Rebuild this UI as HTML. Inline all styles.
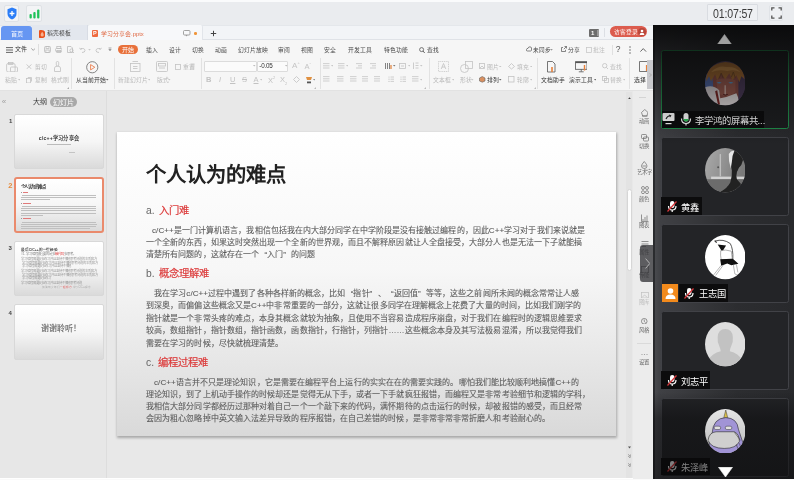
<!DOCTYPE html>
<html lang="zh-CN"><head><meta charset="utf-8">
<style>
*{margin:0;padding:0;box-sizing:border-box}
html,body{width:794px;height:480px;overflow:hidden;background:#fff;font-family:"Liberation Sans",sans-serif}
.a{position:absolute}
.t{position:absolute;white-space:nowrap;line-height:1}
.ql{display:inline-block;width:8px;text-align:right}
.qr{display:inline-block;width:8px;text-align:left}

</style></head><body style="filter:blur(0.3px)">




<div class="a" style="left:0px;top:0px;width:794px;height:2px;background:#fafbfc;"></div>
<div class="a" style="left:0px;top:2px;width:794px;height:23px;background:#eaecef;"></div>
<div class="a" style="left:3.5px;top:4.5px;width:15.5px;height:17px;background:#f3f4f6;border:1px solid #dfe2e6;border-radius:2px"></div>
<svg class="a" style="left:6.5px;top:6.5px" width="10" height="13" viewBox="0 0 10 13"><path d="M5 0.5 L9.5 2.2 L9.5 6.5 Q9.5 10.5 5 12.5 Q0.5 10.5 0.5 6.5 L0.5 2.2Z" fill="#2b7df7"/><path d="M5 4 V9 M2.6 6.5 H7.4" stroke="#fff" stroke-width="1.3"/></svg>
<div class="a" style="left:26px;top:4.5px;width:16px;height:17px;background:#f3f4f6;border:1px solid #dfe2e6;border-radius:2px"></div>
<svg class="a" style="left:28.5px;top:8.5px" width="11" height="10" viewBox="0 0 11 10"><rect x="0.5" y="5" width="2.3" height="4.5" rx="1" fill="#1fc25a"/><rect x="4.3" y="3" width="2.3" height="6.5" rx="1" fill="#1fc25a"/><rect x="8.1" y="0.5" width="2.3" height="9" rx="1" fill="#1fc25a"/></svg>
<div class="a" style="left:707.4px;top:4.3px;width:51px;height:17px;background:#eef0f3;border:1px solid #d9dce1;border-radius:1px"></div>
<div class="t" style="left:713.3px;top:7.6px;font-size:12.6px;color:#3a3a3a;letter-spacing:-0.2px;transform:scaleX(0.84);transform-origin:0 0">01:07:57</div>
<div class="a" style="left:768.6px;top:4.5px;width:14.8px;height:16.5px;background:#eef0f3;border:1px solid #e0e3e7;border-radius:2px"></div>
<svg class="a" style="left:770.5px;top:6.5px" width="11" height="12" viewBox="0 0 11 12"><path d="M0.8 3.5 V0.8 H3.5 M7.5 0.8 H10.2 V3.5 M10.2 8.5 V11.2 H7.5 M3.5 11.2 H0.8 V8.5" stroke="#555" stroke-width="1.3" fill="none"/></svg>
<div class="a" style="left:0px;top:24.5px;width:653px;height:15.5px;background:#f2f4f7;border-top:1px solid #e4e7eb;border-bottom:1px solid #dfe2e7"></div>
<div class="a" style="left:0.5px;top:25.5px;width:31.5px;height:14px;background:#6696f2;border-radius:3px 3px 0 0"></div>
<div class="t" style="left:10.8px;top:30.59px;font-size:6.2px;color:#f4f7ff;">首页</div>
<div class="a" style="left:32px;top:25px;width:56px;height:14.5px;background:#e3e7ee;border-right:1px solid #d8dce4"></div>
<svg class="a" style="left:38.8px;top:29.5px" width="6.6" height="8.2" viewBox="0 0 6.6 8.2"><path d="M1 0 H2.5 A4 4.1 0 0 1 2.5 8.2 H1 Q0 8.2 0 7 V1.2 Q0 0 1 0Z" fill="#e9501c"/><path d="M3.2 1.8 Q4.8 3.8 4.8 5 A1.6 1.6 0 0 1 1.6 5 Q1.6 3.8 3.2 1.8Z" fill="#f7b090"/></svg>
<div class="t" style="left:47px;top:31.01px;font-size:5.8px;color:#444;">稻壳模板</div>
<div class="a" style="left:88px;top:25px;width:114.5px;height:14.5px;background:#f7f8fa;border-radius:2px 2px 0 0;border-right:1px solid #e2e5ea"></div>
<div class="a" style="left:91.8px;top:29.9px;width:6.1px;height:7px;background:#ef6a40;border-radius:1px"></div>
<div class="t" style="left:93px;top:30.5px;font-size:5.5px;color:#fff;font-weight:bold">P</div>
<div class="t" style="left:101px;top:32.05px;font-size:5.9px;color:#e06a45;">学习分享会.pptx</div>
<svg class="a" style="left:182.5px;top:30px" width="8" height="7" viewBox="0 0 8 7"><rect x="0.5" y="0.5" width="6.5" height="4.5" rx="1" fill="none" stroke="#999" stroke-width="0.9"/><path d="M2.5 5 L3.5 6.5 L4.5 5" fill="#999"/></svg>
<div class="a" style="left:194.3px;top:32.3px;width:2.6px;height:2.6px;border-radius:50%;background:#f0953a"></div>
<svg class="a" style="left:209.5px;top:29.8px" width="7" height="7" viewBox="0 0 7 7"><path d="M3.5 0.8 V6.2 M0.8 3.5 H6.2" stroke="#444" stroke-width="1"/></svg>
<div class="a" style="left:588.7px;top:29px;width:10px;height:7.7px;background:#6c6c6c;border-radius:1px"></div>
<div class="a" style="left:596.5px;top:29.8px;width:2.5px;height:6.2px;background:#9a9a9a;"></div>
<div class="t" style="left:591px;top:29.8px;font-size:6px;color:#fff;font-weight:bold">1</div>
<div class="a" style="left:604.3px;top:28.3px;width:0.8px;height:8.7px;background:#dcdfe4;"></div>
<div class="a" style="left:609.9px;top:26.3px;width:37.4px;height:11px;background:#dc5c4e;border-radius:5.5px"></div>
<div class="t" style="left:614px;top:30.02px;font-size:5.6px;color:#fff;">访客登录</div>
<div class="a" style="left:637.8px;top:27.8px;width:8px;height:8px;border-radius:50%;background:#b9473c"></div>
<svg class="a" style="left:638.8px;top:28.8px" width="6" height="6" viewBox="0 0 6 6"><circle cx="3" cy="2" r="1.3" fill="#fff"/><path d="M0.6 6 Q0.6 3.8 3 3.8 Q5.4 3.8 5.4 6Z" fill="#fff"/></svg>
<div class="a" style="left:0px;top:40px;width:653px;height:51px;background:#f6f6f6;border-bottom:1px solid #e2e2e2"></div>
<svg class="a" style="left:6px;top:47.2px" width="7" height="6" viewBox="0 0 7 6"><path d="M0 0.6 H7 M0 3 H7 M0 5.4 H7" stroke="#555" stroke-width="0.9"/></svg>
<div class="t" style="left:15.4px;top:46.40px;font-size:6px;color:#333;">文件</div>
<svg class="a" style="left:30.5px;top:48.2px" width="4.5" height="3" viewBox="0 0 4.5 3"><path d="M0.3 0.3 L2.25 2.4 L4.2 0.3" stroke="#888" stroke-width="0.7" fill="none"/></svg>
<div class="a" style="left:38.3px;top:44px;width:0.8px;height:11px;background:#dedede;"></div>
<svg class="a" style="left:43.5px;top:46px" width="7" height="7" viewBox="0 0 7 7"><rect x="0.5" y="0.5" width="6" height="6" rx="1" stroke="#bdbdbd" stroke-width="0.8" fill="none"/><rect x="2" y="0.5" width="3" height="2" stroke="#bdbdbd" stroke-width="0.8" fill="none"/><rect x="1.8" y="4" width="3.4" height="2.5" stroke="#bdbdbd" stroke-width="0.8" fill="none"/></svg>
<svg class="a" style="left:54.5px;top:46px" width="7.5" height="7" viewBox="0 0 7.5 7"><rect x="0.5" y="2.5" width="6.5" height="3" rx="1" stroke="#bdbdbd" stroke-width="0.8" fill="none"/><rect x="1.8" y="0.5" width="4" height="2" stroke="#bdbdbd" stroke-width="0.8" fill="none"/><rect x="1.8" y="4.5" width="4" height="2" stroke="#bdbdbd" stroke-width="0.8" fill="none"/></svg>
<svg class="a" style="left:67px;top:46px" width="7.5" height="7.5" viewBox="0 0 7.5 7.5"><path d="M0.5 0.5 H4 L5.5 2 V6.5 H0.5Z" stroke="#bdbdbd" stroke-width="0.8" fill="none"/><circle cx="4.5" cy="4.5" r="1.6" stroke="#bdbdbd" stroke-width="0.8" fill="none"/><path d="M5.6 5.6 L7 7" stroke="#bdbdbd" stroke-width="0.8" fill="none"/></svg>
<svg class="a" style="left:79px;top:46.5px" width="7" height="6" viewBox="0 0 7 6"><path d="M1.5 2 Q5.5 0.5 6 3.5 Q6 5.5 3 5.5" stroke="#bdbdbd" stroke-width="0.8" fill="none"/><path d="M0.5 0.8 L1.5 2.3 L3 1.5" stroke="#bdbdbd" stroke-width="0.8" fill="none"/></svg>
<svg class="a" style="left:88px;top:48.5px" width="3" height="2" viewBox="0 0 3 2"><path d="M0.2 0.2 L1.5 1.6 L2.8 0.2" fill="#bbb"/></svg>
<svg class="a" style="left:95px;top:46.5px" width="7" height="6" viewBox="0 0 7 6"><path d="M5.5 2 Q1.5 0.5 1 3.5 Q1 5.5 4 5.5" stroke="#bdbdbd" stroke-width="0.8" fill="none"/><path d="M6.5 0.8 L5.5 2.3 L4 1.5" stroke="#bdbdbd" stroke-width="0.8" fill="none"/></svg>
<svg class="a" style="left:107.5px;top:47px" width="4" height="5" viewBox="0 0 4 5"><path d="M0.5 0.8 H3.5 M0.8 2 H3.2 L2 4Z" stroke="#999" stroke-width="0.6" fill="#999"/></svg>
<div class="a" style="left:118px;top:45px;width:20.3px;height:9.3px;background:#e8703a;border-radius:4.6px"></div>
<div class="t" style="left:122.2px;top:46.70px;font-size:6px;color:#fff;">开始</div>
<div class="t" style="left:145.8px;top:47.91px;font-size:5.8px;color:#4a4a4a;">插入</div>
<div class="t" style="left:169.4px;top:47.91px;font-size:5.8px;color:#4a4a4a;">设计</div>
<div class="t" style="left:192px;top:47.91px;font-size:5.8px;color:#4a4a4a;">切换</div>
<div class="t" style="left:214.8px;top:47.91px;font-size:5.8px;color:#4a4a4a;">动画</div>
<div class="t" style="left:237.5px;top:47.91px;font-size:5.8px;color:#4a4a4a;">幻灯片放映</div>
<div class="t" style="left:277.9px;top:47.91px;font-size:5.8px;color:#4a4a4a;">审阅</div>
<div class="t" style="left:300.6px;top:47.91px;font-size:5.8px;color:#4a4a4a;">视图</div>
<div class="t" style="left:324px;top:47.91px;font-size:5.8px;color:#4a4a4a;">安全</div>
<div class="t" style="left:348.2px;top:47.91px;font-size:5.8px;color:#4a4a4a;">开发工具</div>
<div class="t" style="left:383.8px;top:47.91px;font-size:5.8px;color:#4a4a4a;">特色功能</div>
<svg class="a" style="left:419.2px;top:46.6px" width="6" height="6.5" viewBox="0 0 6 6.5"><circle cx="2.6" cy="2.6" r="2" stroke="#555" stroke-width="0.8" fill="none"/><path d="M4 4 L5.7 6" stroke="#555" stroke-width="0.9"/></svg>
<div class="t" style="left:426.5px;top:47.91px;font-size:5.8px;color:#3e3e3e;">查找</div>
<svg class="a" style="left:526px;top:46.4px" width="6" height="6" viewBox="0 0 6 6"><path d="M1.5 5 Q0 5 0.5 3.5 Q0.8 2.2 2 2.4 Q2.5 0.6 4 0.8 Q5.8 1 5.6 3 Q5.8 5 4.5 5Z" stroke="#555" stroke-width="0.7" fill="none"/></svg>
<div class="t" style="left:532.5px;top:48.02px;font-size:5.6px;color:#3e3e3e;">未同步</div>
<svg class="a" style="left:550.3px;top:48.7px" width="3" height="2" viewBox="0 0 3 2"><path d="M0.2 0.2 L1.5 1.6 L2.8 0.2" fill="#777"/></svg>
<svg class="a" style="left:560.5px;top:46.3px" width="6" height="6" viewBox="0 0 6 6"><path d="M3.5 0.5 H5.5 V2.5 M5.5 0.5 L2.8 3.2 M4.5 3.8 V5.5 H0.5 V1.5 H2" stroke="#555" stroke-width="0.7" fill="none"/></svg>
<div class="t" style="left:567.5px;top:47.91px;font-size:5.8px;color:#3e3e3e;">分享</div>
<svg class="a" style="left:585.5px;top:46.5px" width="6" height="6" viewBox="0 0 6 6"><rect x="0.5" y="0.5" width="5" height="5" stroke="#c4c4c4" stroke-width="0.7" fill="none"/></svg>
<div class="t" style="left:592.5px;top:47.91px;font-size:5.8px;color:#bdbdbd;">批注</div>
<div class="a" style="left:611.5px;top:45px;width:0.7px;height:10px;background:#e0e0e0;"></div>
<div class="t" style="left:615.8px;top:45.3px;font-size:8.5px;color:#555">?</div>
<svg class="a" style="left:629.2px;top:46px" width="2" height="8" viewBox="0 0 2 8"><circle cx="1" cy="1" r="0.7" fill="#555"/><circle cx="1" cy="4" r="0.7" fill="#555"/><circle cx="1" cy="7" r="0.7" fill="#555"/></svg>
<svg class="a" style="left:640px;top:47.5px" width="6.5" height="4" viewBox="0 0 6.5 4"><path d="M0.4 3.6 L3.25 0.6 L6.1 3.6" stroke="#555" stroke-width="0.9" fill="none"/></svg>
<svg class="a" style="left:6px;top:61.7px" width="12" height="10.5" viewBox="0 0 12 10.5"><rect x="0.6" y="1.5" width="8.5" height="8.5" rx="1.5" stroke="#c2c2c2" stroke-width="0.8" fill="none"/><rect x="2.5" y="0.5" width="4.5" height="2" stroke="#c2c2c2" stroke-width="0.8" fill="none"/><rect x="4.5" y="5" width="7" height="5" rx="1" stroke="#c2c2c2" stroke-width="0.8" fill="none" fill="#f6f6f6"/></svg>
<div class="t" style="left:5px;top:78.31px;font-size:5.8px;color:#bababa;">粘贴</div>
<svg class="a" style="left:17.5px;top:79px" width="2.5" height="1.7" viewBox="0 0 2.5 1.7"><path d="M0 0 L1.25 1.5 L2.5 0" fill="#c4c4c4"/></svg>
<svg class="a" style="left:25.5px;top:63.8px" width="6" height="5.5" viewBox="0 0 6 5.5"><path d="M0.5 0.5 L5.5 5 M5.5 0.5 L0.5 5" stroke="#c2c2c2" stroke-width="0.8" fill="none"/></svg>
<div class="t" style="left:34.5px;top:65.21px;font-size:5.8px;color:#b9b9b9;">剪切</div>
<svg class="a" style="left:25.5px;top:76.5px" width="6" height="6.5" viewBox="0 0 6 6.5"><rect x="0.5" y="1.5" width="4" height="4.5" stroke="#c2c2c2" stroke-width="0.8" fill="none"/><path d="M1.8 0.5 H5.5 V4.5" stroke="#c2c2c2" stroke-width="0.8" fill="none"/></svg>
<div class="t" style="left:34.5px;top:78.31px;font-size:5.8px;color:#b9b9b9;">复制</div>
<svg class="a" style="left:53.5px;top:61.2px" width="7" height="11" viewBox="0 0 7 11"><rect x="2.3" y="0.5" width="2.4" height="4.5" rx="1" stroke="#c2c2c2" stroke-width="0.8" fill="none"/><path d="M0.5 10.5 V7 Q0.5 5.2 3.5 5.2 Q6.5 5.2 6.5 7 V10.5Z" stroke="#c2c2c2" stroke-width="0.8" fill="none"/></svg>
<div class="t" style="left:50.5px;top:78.31px;font-size:5.8px;color:#b9b9b9;">格式刷</div>
<svg class="a" style="left:67px;top:86.5px" width="2" height="2" viewBox="0 0 2 2"><path d="M0 2 L2 0 L2 2Z" fill="#aaa"/></svg>
<div class="a" style="left:71.3px;top:58px;width:0.7px;height:31px;background:#e2e2e2;"></div>
<svg class="a" style="left:86px;top:61px" width="12.5" height="12.5" viewBox="0 0 12.5 12.5"><circle cx="6.25" cy="6.25" r="5.6" stroke="#777" stroke-width="0.9" fill="none"/><path d="M4.6 3.6 L8.8 6.25 L4.6 8.9Z" stroke="#e8703a" stroke-width="0.8" fill="none"/></svg>
<div class="t" style="left:76px;top:78.25px;font-size:5.9px;color:#3a3a3a;">从当前开始</div>
<svg class="a" style="left:106px;top:79px" width="2.5" height="1.7" viewBox="0 0 2.5 1.7"><path d="M0 0 L1.25 1.5 L2.5 0" fill="#666"/></svg>
<div class="a" style="left:113.8px;top:58px;width:0.7px;height:31px;background:#e2e2e2;"></div>
<svg class="a" style="left:130px;top:61px" width="10.5" height="11" viewBox="0 0 10.5 11"><rect x="0.5" y="2.5" width="9.5" height="8" stroke="#c2c2c2" stroke-width="0.8" fill="none"/><path d="M2.5 0.5 H8 M3 5.5 H7.5 M3 7.5 H7.5" stroke="#c2c2c2" stroke-width="0.8" fill="none"/></svg>
<div class="t" style="left:118px;top:78.31px;font-size:5.8px;color:#b9b9b9;">新建幻灯片</div>
<svg class="a" style="left:147.5px;top:79px" width="2.5" height="1.7" viewBox="0 0 2.5 1.7"><path d="M0 0 L1.25 1.5 L2.5 0" fill="#c4c4c4"/></svg>
<svg class="a" style="left:156px;top:61px" width="12" height="11" viewBox="0 0 12 11"><rect x="0.5" y="0.5" width="11" height="10" rx="1" stroke="#c2c2c2" stroke-width="0.8" fill="none"/><rect x="2.5" y="2.5" width="7" height="2.5" stroke="#c2c2c2" stroke-width="0.8" fill="none"/><path d="M3 7 H9" stroke="#c2c2c2" stroke-width="0.8" fill="none"/></svg>
<div class="t" style="left:157px;top:78.31px;font-size:5.8px;color:#b9b9b9;">版式</div>
<svg class="a" style="left:168px;top:79px" width="2.5" height="1.7" viewBox="0 0 2.5 1.7"><path d="M0 0 L1.25 1.5 L2.5 0" fill="#c4c4c4"/></svg>
<svg class="a" style="left:175px;top:63.5px" width="6" height="6" viewBox="0 0 6 6"><rect x="0.5" y="0.5" width="5" height="5" stroke="#c2c2c2" stroke-width="0.8" fill="none"/></svg>
<div class="t" style="left:182.5px;top:65.21px;font-size:5.8px;color:#b9b9b9;">重置</div>
<svg class="a" style="left:190px;top:63px" width="5" height="7" viewBox="0 0 5 7"><path d="M0.5 1 H4.5 M0.5 3 H4.5 M0.5 5 H4.5" stroke="#c2c2c2" stroke-width="0.8" fill="none"/></svg>
<div class="a" style="left:200.5px;top:58px;width:0.7px;height:31px;background:#e2e2e2;"></div>
<div class="a" style="left:204px;top:60.5px;width:53px;height:11.2px;background:#fbfbfb;border:1px solid #dcdcdc;border-radius:1px"></div>
<div class="a" style="left:256.8px;top:60.5px;width:31.5px;height:11.2px;background:#fbfbfb;border:1px solid #dcdcdc;border-radius:1px"></div>
<svg class="a" style="left:253px;top:65.3px" width="2.5" height="1.7" viewBox="0 0 2.5 1.7"><path d="M0 0 L1.25 1.5 L2.5 0" fill="#bbb"/></svg>
<svg class="a" style="left:285px;top:65.3px" width="2.5" height="1.7" viewBox="0 0 2.5 1.7"><path d="M0 0 L1.25 1.5 L2.5 0" fill="#bbb"/></svg>
<div class="t" style="left:259.3px;top:62.8px;font-size:6.3px;color:#333;letter-spacing:-0.2px">-0.05</div>
<div class="t" style="left:292px;top:62px;font-size:8px;color:#c4c4c4">A</div>
<div class="t" style="left:297.5px;top:61px;font-size:4px;color:#c4c4c4">+</div>
<div class="t" style="left:304.5px;top:62.5px;font-size:7.5px;color:#c4c4c4">A</div>
<div class="t" style="left:309.5px;top:61px;font-size:4px;color:#c4c4c4">-</div>
<div class="t" style="left:206px;top:75.6px;font-size:7.5px;color:#c2c2c2;font-weight:bold">B</div>
<div class="t" style="left:219px;top:75.6px;font-size:7.5px;color:#c2c2c2;font-style:italic">I</div>
<div class="t" style="left:230px;top:75.6px;font-size:7.5px;color:#c2c2c2;text-decoration:underline">U</div>
<div class="t" style="left:242px;top:75.6px;font-size:7.5px;color:#c2c2c2;text-decoration:line-through">S</div>
<div class="t" style="left:253.5px;top:75.6px;font-size:7.5px;color:#c2c2c2;text-decoration:underline">A</div>
<svg class="a" style="left:259.5px;top:79px" width="2.5" height="1.7" viewBox="0 0 2.5 1.7"><path d="M0 0 L1.25 1.5 L2.5 0" fill="#c4c4c4"/></svg>
<div class="t" style="left:268px;top:75.6px;font-size:7.5px;color:#c2c2c2">X<sup style="font-size:4px">2</sup></div>
<div class="t" style="left:280px;top:75.6px;font-size:7.5px;color:#c2c2c2">X<sub style="font-size:4px">2</sub></div>
<svg class="a" style="left:293px;top:76px" width="7" height="7" viewBox="0 0 7 7"><path d="M3.5 0.5 L6.5 3.5 L3.5 6.5 L0.5 3.5Z" stroke="#c2c2c2" stroke-width="0.8" fill="none"/></svg>
<svg class="a" style="left:305px;top:75.5px" width="9" height="8" viewBox="0 0 9 8"><path d="M1 1 H7 L6 4 H2Z" fill="#e09040"/><rect x="2" y="5.5" width="4" height="1.8" fill="#555"/></svg>
<svg class="a" style="left:312.5px;top:79px" width="2.5" height="1.7" viewBox="0 0 2.5 1.7"><path d="M0 0 L1.25 1.5 L2.5 0" fill="#888"/></svg>
<svg class="a" style="left:314px;top:86.5px" width="2" height="2" viewBox="0 0 2 2"><path d="M0 2 L2 0 L2 2Z" fill="#bbb"/></svg>
<div class="a" style="left:320px;top:58px;width:0.7px;height:31px;background:#e2e2e2;"></div>
<svg class="a" style="left:323px;top:62.8px" width="6.5" height="7.1000000000000005" viewBox="0 0 6.5 7.1000000000000005"><path d="M0 0.6 H6.5" stroke="#c4c4c4" stroke-width="0.8"/><path d="M0 2.8000000000000003 H6.5" stroke="#c4c4c4" stroke-width="0.8"/><path d="M0 5.0 H6.5" stroke="#c4c4c4" stroke-width="0.8"/></svg>
<svg class="a" style="left:330.5px;top:65.3px" width="2.5" height="1.7" viewBox="0 0 2.5 1.7"><path d="M0 0 L1.25 1.5 L2.5 0" fill="#c4c4c4"/></svg>
<svg class="a" style="left:338px;top:62.8px" width="6.5" height="7.1000000000000005" viewBox="0 0 6.5 7.1000000000000005"><path d="M0 0.6 H6.5" stroke="#c4c4c4" stroke-width="0.8"/><path d="M0 2.8000000000000003 H6.5" stroke="#c4c4c4" stroke-width="0.8"/><path d="M0 5.0 H6.5" stroke="#c4c4c4" stroke-width="0.8"/></svg>
<svg class="a" style="left:345.5px;top:65.3px" width="2.5" height="1.7" viewBox="0 0 2.5 1.7"><path d="M0 0 L1.25 1.5 L2.5 0" fill="#c4c4c4"/></svg>
<svg class="a" style="left:356px;top:62.8px" width="6" height="7.1000000000000005" viewBox="0 0 6 7.1000000000000005"><path d="M0 0.6 H6" stroke="#c4c4c4" stroke-width="0.8"/><path d="M2 2.8000000000000003 H6" stroke="#c4c4c4" stroke-width="0.8"/><path d="M0 5.0 H6" stroke="#c4c4c4" stroke-width="0.8"/></svg>
<svg class="a" style="left:370px;top:62.8px" width="6" height="7.1000000000000005" viewBox="0 0 6 7.1000000000000005"><path d="M0 0.6 H6" stroke="#c4c4c4" stroke-width="0.8"/><path d="M2 2.8000000000000003 H6" stroke="#c4c4c4" stroke-width="0.8"/><path d="M0 5.0 H6" stroke="#c4c4c4" stroke-width="0.8"/></svg>
<svg class="a" style="left:384.5px;top:62.2px" width="8" height="7.5" viewBox="0 0 8 7.5"><path d="M0.5 1 V7 M2.5 1 V7 M4.5 1 V7" stroke="#666" stroke-width="0.8"/><path d="M6 3 V7" stroke="#e0803a" stroke-width="1.2"/></svg>
<svg class="a" style="left:393px;top:65.3px" width="2.5" height="1.7" viewBox="0 0 2.5 1.7"><path d="M0 0 L1.25 1.5 L2.5 0" fill="#777"/></svg>
<svg class="a" style="left:399px;top:62.5px" width="7" height="6" viewBox="0 0 7 6"><rect x="0.5" y="0.5" width="6" height="5" stroke="#c2c2c2" stroke-width="0.8" fill="none"/><path d="M2 3 H5" stroke="#c2c2c2" stroke-width="0.8" fill="none"/></svg>
<svg class="a" style="left:407.5px;top:65.3px" width="2.5" height="1.7" viewBox="0 0 2.5 1.7"><path d="M0 0 L1.25 1.5 L2.5 0" fill="#c4c4c4"/></svg>
<svg class="a" style="left:413px;top:62px" width="6" height="7.5" viewBox="0 0 6 7.5"><path d="M0.5 0.5 V7 M2.5 1 H5.5 M2.5 3.5 H5.5 M2.5 6 H5.5" stroke="#c2c2c2" stroke-width="0.8" fill="none"/></svg>
<svg class="a" style="left:420px;top:65.3px" width="2.5" height="1.7" viewBox="0 0 2.5 1.7"><path d="M0 0 L1.25 1.5 L2.5 0" fill="#c4c4c4"/></svg>
<svg class="a" style="left:323px;top:76px" width="6.5" height="7.1000000000000005" viewBox="0 0 6.5 7.1000000000000005"><path d="M0 0.6 H6.5" stroke="#c4c4c4" stroke-width="0.8"/><path d="M0 2.8000000000000003 H6.5" stroke="#c4c4c4" stroke-width="0.8"/><path d="M0 5.0 H6.5" stroke="#c4c4c4" stroke-width="0.8"/></svg>
<svg class="a" style="left:337px;top:76px" width="6.5" height="7.1000000000000005" viewBox="0 0 6.5 7.1000000000000005"><path d="M0 0.6 H6.5" stroke="#c4c4c4" stroke-width="0.8"/><path d="M0 2.8000000000000003 H6.5" stroke="#c4c4c4" stroke-width="0.8"/><path d="M0 5.0 H6.5" stroke="#c4c4c4" stroke-width="0.8"/></svg>
<svg class="a" style="left:350px;top:76px" width="6.5" height="7.1000000000000005" viewBox="0 0 6.5 7.1000000000000005"><path d="M0 0.6 H6.5" stroke="#c4c4c4" stroke-width="0.8"/><path d="M0 2.8000000000000003 H6.5" stroke="#c4c4c4" stroke-width="0.8"/><path d="M0 5.0 H6.5" stroke="#c4c4c4" stroke-width="0.8"/></svg>
<svg class="a" style="left:361.5px;top:76px" width="6.5" height="7.1000000000000005" viewBox="0 0 6.5 7.1000000000000005"><path d="M0 0.6 H6.5" stroke="#c4c4c4" stroke-width="0.8"/><path d="M0 2.8000000000000003 H6.5" stroke="#c4c4c4" stroke-width="0.8"/><path d="M0 5.0 H6.5" stroke="#c4c4c4" stroke-width="0.8"/></svg>
<svg class="a" style="left:373.5px;top:76px" width="6.5" height="7.1000000000000005" viewBox="0 0 6.5 7.1000000000000005"><path d="M0 0.6 H6.5" stroke="#c4c4c4" stroke-width="0.8"/><path d="M0 2.8000000000000003 H6.5" stroke="#c4c4c4" stroke-width="0.8"/><path d="M0 5.0 H6.5" stroke="#c4c4c4" stroke-width="0.8"/></svg>
<svg class="a" style="left:388px;top:76px" width="6" height="6.5" viewBox="0 0 6 6.5"><circle cx="1" cy="1" r="0.6" fill="#c4c4c4"/><circle cx="1" cy="3.2" r="0.6" fill="#c4c4c4"/><circle cx="1" cy="5.4" r="0.6" fill="#c4c4c4"/><path d="M2.5 1 H6 M2.5 3.2 H6 M2.5 5.4 H6" stroke="#c4c4c4" stroke-width="0.8"/></svg>
<svg class="a" style="left:400px;top:76px" width="6" height="6.5" viewBox="0 0 6 6.5"><circle cx="1" cy="1" r="0.6" fill="#c4c4c4"/><circle cx="1" cy="3.2" r="0.6" fill="#c4c4c4"/><circle cx="1" cy="5.4" r="0.6" fill="#c4c4c4"/><path d="M2.5 1 H6 M2.5 3.2 H6 M2.5 5.4 H6" stroke="#c4c4c4" stroke-width="0.8"/></svg>
<svg class="a" style="left:412px;top:76px" width="6.5" height="7.1000000000000005" viewBox="0 0 6.5 7.1000000000000005"><path d="M0 0.6 H6.5" stroke="#c4c4c4" stroke-width="0.8"/><path d="M0 2.8000000000000003 H6.5" stroke="#c4c4c4" stroke-width="0.8"/><path d="M0 5.0 H6.5" stroke="#c4c4c4" stroke-width="0.8"/></svg>
<svg class="a" style="left:419.5px;top:79px" width="2.5" height="1.7" viewBox="0 0 2.5 1.7"><path d="M0 0 L1.25 1.5 L2.5 0" fill="#c4c4c4"/></svg>
<svg class="a" style="left:424px;top:86.5px" width="2" height="2" viewBox="0 0 2 2"><path d="M0 2 L2 0 L2 2Z" fill="#bbb"/></svg>
<div class="a" style="left:428.5px;top:58px;width:0.7px;height:31px;background:#e2e2e2;"></div>
<svg class="a" style="left:437.5px;top:61px" width="11" height="11" viewBox="0 0 11 11"><rect x="0.5" y="0.5" width="10" height="10" stroke="#c2c2c2" stroke-width="0.8" fill="none" stroke-dasharray="1 0.8"/><path d="M3.2 8 L5.5 2.5 L7.8 8 M4 6 H7" stroke="#c2c2c2" stroke-width="0.8" fill="none"/></svg>
<div class="t" style="left:433px;top:78.31px;font-size:5.8px;color:#b9b9b9;">文本框</div>
<svg class="a" style="left:451.5px;top:79px" width="2.5" height="1.7" viewBox="0 0 2.5 1.7"><path d="M0 0 L1.25 1.5 L2.5 0" fill="#c4c4c4"/></svg>
<svg class="a" style="left:460px;top:60.5px" width="13" height="12" viewBox="0 0 13 12"><circle cx="4.5" cy="7.5" r="4" stroke="#c2c2c2" stroke-width="0.8" fill="none"/><rect x="5.5" y="0.5" width="7" height="7" stroke="#c2c2c2" stroke-width="0.8" fill="none"/></svg>
<div class="t" style="left:459.5px;top:78.31px;font-size:5.8px;color:#b9b9b9;">形状</div>
<svg class="a" style="left:471px;top:79px" width="2.5" height="1.7" viewBox="0 0 2.5 1.7"><path d="M0 0 L1.25 1.5 L2.5 0" fill="#c4c4c4"/></svg>
<svg class="a" style="left:479px;top:63.3px" width="6" height="6" viewBox="0 0 6 6"><rect x="0.5" y="0.5" width="5" height="5" stroke="#c2c2c2" stroke-width="0.8" fill="none"/><path d="M1 5 L3 3 L5 5" stroke="#c2c2c2" stroke-width="0.8" fill="none"/></svg>
<div class="t" style="left:486.5px;top:65.21px;font-size:5.8px;color:#b9b9b9;">图片</div>
<svg class="a" style="left:499px;top:65.7px" width="2.5" height="1.7" viewBox="0 0 2.5 1.7"><path d="M0 0 L1.25 1.5 L2.5 0" fill="#c4c4c4"/></svg>
<svg class="a" style="left:479px;top:76.3px" width="6.5" height="6.5" viewBox="0 0 6.5 6.5"><path d="M3.25 0.5 L6 2 V5 L3.25 6.2 L0.5 5 V2Z" fill="#d99060" stroke="#666" stroke-width="0.6"/></svg>
<div class="t" style="left:486.5px;top:78.31px;font-size:5.8px;color:#333;">排列</div>
<svg class="a" style="left:499px;top:79px" width="2.5" height="1.7" viewBox="0 0 2.5 1.7"><path d="M0 0 L1.25 1.5 L2.5 0" fill="#666"/></svg>
<svg class="a" style="left:508px;top:63px" width="7" height="6.5" viewBox="0 0 7 6.5"><path d="M3.5 0.5 L6.5 3.5 L3.5 6 L0.5 3.5Z" stroke="#c2c2c2" stroke-width="0.8" fill="none"/></svg>
<div class="t" style="left:516.5px;top:65.21px;font-size:5.8px;color:#b9b9b9;">填充</div>
<svg class="a" style="left:529.5px;top:65.7px" width="2.5" height="1.7" viewBox="0 0 2.5 1.7"><path d="M0 0 L1.25 1.5 L2.5 0" fill="#c4c4c4"/></svg>
<svg class="a" style="left:508px;top:76.3px" width="6.5" height="6.5" viewBox="0 0 6.5 6.5"><rect x="0.5" y="0.5" width="5.5" height="5.5" stroke="#c2c2c2" stroke-width="0.8" fill="none"/></svg>
<div class="t" style="left:516.5px;top:78.31px;font-size:5.8px;color:#b9b9b9;">轮廓</div>
<svg class="a" style="left:529.5px;top:79px" width="2.5" height="1.7" viewBox="0 0 2.5 1.7"><path d="M0 0 L1.25 1.5 L2.5 0" fill="#c4c4c4"/></svg>
<svg class="a" style="left:534px;top:86.5px" width="2" height="2" viewBox="0 0 2 2"><path d="M0 2 L2 0 L2 2Z" fill="#bbb"/></svg>
<div class="a" style="left:537.3px;top:58px;width:0.7px;height:31px;background:#e2e2e2;"></div>
<svg class="a" style="left:546.5px;top:61px" width="9" height="11.5" viewBox="0 0 9 11.5"><path d="M0.5 0.5 H5.5 L8 3 V11 H0.5Z" stroke="#555" stroke-width="0.8" fill="none"/><path d="M5 6 V11" stroke="#e8803a" stroke-width="1.6"/></svg>
<div class="t" style="left:541px;top:78.31px;font-size:5.8px;color:#333;">文档助手</div>
<svg class="a" style="left:574.5px;top:61px" width="12.5" height="11.5" viewBox="0 0 12.5 11.5"><rect x="0.5" y="0.8" width="11.5" height="7.5" stroke="#555" stroke-width="0.8" fill="none"/><rect x="0.5" y="0.5" width="11.5" height="1.6" fill="#555"/><path d="M6.25 8.3 V10.5 M3.8 10.8 H8.7" stroke="#555" stroke-width="0.8"/><path d="M9.5 4 V9.5" stroke="#e8803a" stroke-width="1.4"/></svg>
<div class="t" style="left:569px;top:78.31px;font-size:5.8px;color:#333;">演示工具</div>
<svg class="a" style="left:593.5px;top:79px" width="2.5" height="1.7" viewBox="0 0 2.5 1.7"><path d="M0 0 L1.25 1.5 L2.5 0" fill="#666"/></svg>
<svg class="a" style="left:602px;top:63px" width="6.5" height="6.5" viewBox="0 0 6.5 6.5"><circle cx="2.7" cy="2.7" r="2.2" stroke="#c2c2c2" stroke-width="0.8" fill="none"/><path d="M4.3 4.3 L6 6" stroke="#c2c2c2" stroke-width="0.8" fill="none"/></svg>
<div class="t" style="left:609.5px;top:65.21px;font-size:5.8px;color:#b9b9b9;">查找</div>
<svg class="a" style="left:602px;top:76px" width="7" height="7" viewBox="0 0 7 7"><rect x="0.5" y="0.5" width="4" height="4" stroke="#c2c2c2" stroke-width="0.8" fill="none"/><rect x="2.5" y="2.5" width="4" height="4" stroke="#c2c2c2" stroke-width="0.8" fill="none"/></svg>
<div class="t" style="left:609.5px;top:78.31px;font-size:5.8px;color:#b9b9b9;">替换</div>
<svg class="a" style="left:622.5px;top:79px" width="2.5" height="1.7" viewBox="0 0 2.5 1.7"><path d="M0 0 L1.25 1.5 L2.5 0" fill="#c4c4c4"/></svg>
<div class="a" style="left:628.5px;top:58px;width:0.7px;height:31px;background:#e2e2e2;"></div>
<svg class="a" style="left:639px;top:61px" width="9" height="11" viewBox="0 0 9 11"><path d="M8.5 0.5 H0.5 V10.5 H8.5" stroke="#555" stroke-width="0.8" fill="none"/><path d="M7.5 4 V10" stroke="#e8803a" stroke-width="1.2"/></svg>
<div class="t" style="left:634px;top:78.31px;font-size:5.8px;color:#333;">选择</div>
<div class="a" style="left:647px;top:59.8px;width:5.6px;height:29.6px;background:#c9c9cd;"></div>
<svg class="a" style="left:648.5px;top:72.5px" width="3" height="4" viewBox="0 0 3 4"><path d="M0.5 0.3 L2.5 2 L0.5 3.7" stroke="#999" stroke-width="0.6" fill="none"/></svg>
<!-- ===== work area ===== -->
<div class="a" style="left:0;top:91px;width:653px;height:387px;background:#e8e8e8"></div>
<div class="a" style="left:0;top:91px;width:107px;height:387px;background:#e7e7e7;border-right:1px solid #dddddd"></div>
<div class="t" style="left:1.8px;top:97.6px;font-size:8px;color:#a0a0a0">&laquo;</div>
<div class="t" style="left:33px;top:97.5px;font-size:7px;color:#3a3a3a">大纲</div>
<div class="a" style="left:50px;top:97px;width:26.5px;height:10px;border-radius:5px;background:#a8a8a8"></div>
<div class="t" style="left:52.5px;top:98.5px;font-size:7px;color:#fff">幻灯片</div>
<div class="a" style="left:14.3px;top:113.8px;width:89.3px;height:55.6px;border:1px solid #d8d8d8;border-radius:2px;background:linear-gradient(#ffffff,#f6f6f6 50%,#dadada)"></div>
<div class="a" style="left:14.3px;top:241.1px;width:89.3px;height:55.2px;border:1px solid #d8d8d8;border-radius:2px;background:linear-gradient(#ffffff,#f6f6f6 50%,#dadada)"></div>
<div class="a" style="left:14.3px;top:304.4px;width:89.3px;height:55.4px;border:1px solid #d8d8d8;border-radius:2px;background:linear-gradient(#ffffff,#f6f6f6 50%,#dadada)"></div>
<div class="t" style="left:9px;top:118px;font-size:6px;font-weight:bold;color:#444">1</div>
<div class="t" style="left:8.3px;top:181.5px;font-size:7.5px;font-weight:bold;color:#e58a3c">2</div>
<div class="t" style="left:8.5px;top:245px;font-size:6px;font-weight:bold;color:#444">3</div>
<div class="t" style="left:8.5px;top:310px;font-size:6px;font-weight:bold;color:#444">4</div>
<div class="t" style="left:38.7px;top:135.6px;font-size:5.2px;font-weight:bold;color:#333;letter-spacing:0.2px">c/c++学习分享会</div>
<div class="a" style="left:47.0px;top:144.25px;width:23.7px;height:1.1px;background:#bbb"></div>
<div class="a" style="left:69.4px;top:151.70px;width:5.8px;height:1.0px;background:#c4c4c4"></div>
<div class="t" style="left:21px;top:248.70px;font-size:3.6px;color:#444;letter-spacing:-0.1px;font-weight:bold;">最后C/C++的一些经验</div>
<div class="t" style="left:21px;top:253.20px;font-size:3.3px;color:#888;letter-spacing:-0.1px;">#1. 学习编程最重要的是多<span style="color:#e04040">敲代码</span>多思考。</div>
<div class="t" style="left:21px;top:258.00px;font-size:3.3px;color:#9a9a9a;letter-spacing:-0.1px;">学习编程需要多多练习并且坚持不懈地思考问题的本质和方</div>
<div class="t" style="left:22px;top:261.70px;font-size:3.3px;color:#9a9a9a;letter-spacing:-0.1px;">学习编程需要多多练习并且坚持不懈地思考问题的本质和方</div>
<div class="t" style="left:22px;top:265.40px;font-size:3.3px;color:#9a9a9a;letter-spacing:-0.1px;">学习编程需要多多练习并且坚持不懈地</div>
<div class="t" style="left:21px;top:270.10px;font-size:3.3px;color:#9a9a9a;letter-spacing:-0.1px;">学习编程需要多多练习并且坚持不懈地思考问题的本质和方</div>
<div class="t" style="left:22px;top:273.80px;font-size:3.3px;color:#9a9a9a;letter-spacing:-0.1px;">学习编程需要多多练习并且坚持不懈地思考问题的本质和方</div>
<div class="t" style="left:22px;top:277.40px;font-size:3.3px;color:#9a9a9a;letter-spacing:-0.1px;">学习编程需要多多练习</div>
<div class="t" style="left:21px;top:282.10px;font-size:3.3px;color:#9a9a9a;letter-spacing:-0.1px;">学习编程需要多多练习并且坚持不懈地思考问题</div>
<div class="t" style="left:42.3px;top:286.60px;font-size:2.6px;color:#aaa;letter-spacing:-0.1px;">加油吧少年们 <span style="color:#e06060">一起努力</span> 学习C/C++程序</div>
<div class="t" style="left:41.3px;top:325.2px;font-size:8px;color:#6a6a6a;-webkit-text-stroke:0.15px #6a6a6a">谢谢聆听！</div>
<div class="a" style="left:13.8px;top:176.8px;width:90.1px;height:56.5px;border:2px solid #ea8a6c;border-radius:3px;background:linear-gradient(#ffffff,#f6f6f6 50%,#dadada)"></div>
<div class="t" style="left:20.8px;top:184.9px;font-size:4.3px;font-weight:bold;color:#2a2a2a;letter-spacing:-0.5px">个人认为的难点</div>
<div class="a" style="left:20.82px;top:191.95px;width:1.38px;height:1.00px;background:#999"></div>
<div class="a" style="left:23.07px;top:191.78px;width:4.50px;height:1.04px;background:#e07a7a"></div>
<div class="a" style="left:21.86px;top:195px;width:74.56px;height:1px;background:#bfbfbf"></div>
<div class="a" style="left:20.99px;top:197px;width:75.08px;height:1px;background:#bfbfbf"></div>
<div class="a" style="left:20.82px;top:199px;width:28.89px;height:1px;background:#bfbfbf"></div>
<div class="a" style="left:20.99px;top:202.85px;width:1.38px;height:1.00px;background:#999"></div>
<div class="a" style="left:23.24px;top:202.67px;width:7.78px;height:1.04px;background:#e07a7a"></div>
<div class="a" style="left:22.20px;top:206px;width:73.35px;height:1px;background:#bfbfbf"></div>
<div class="a" style="left:20.82px;top:208px;width:75.08px;height:1px;background:#bfbfbf"></div>
<div class="a" style="left:20.82px;top:210px;width:75.25px;height:1px;background:#bfbfbf"></div>
<div class="a" style="left:20.82px;top:213px;width:75.25px;height:1px;background:#bfbfbf"></div>
<div class="a" style="left:20.99px;top:215px;width:22.49px;height:1px;background:#bfbfbf"></div>
<div class="a" style="left:20.82px;top:218.24px;width:1.38px;height:1.00px;background:#999"></div>
<div class="a" style="left:23.07px;top:218.07px;width:8.13px;height:1.04px;background:#e07a7a"></div>
<div class="a" style="left:22.20px;top:222px;width:73.35px;height:1px;background:#bfbfbf"></div>
<div class="a" style="left:20.82px;top:224px;width:76.12px;height:1px;background:#bfbfbf"></div>
<div class="a" style="left:20.82px;top:226px;width:75.08px;height:1px;background:#bfbfbf"></div>
<div class="a" style="left:20.82px;top:228px;width:68.85px;height:1px;background:#bfbfbf"></div>
<!-- main slide -->
<div class="a" style="left:117px;top:132px;width:499px;height:304px;box-shadow:0.5px 1px 2.5px 0.5px rgba(0,0,0,.28)"><div class="a" style="left:0;top:0;width:499px;height:304px;background:linear-gradient(#ffffff,#f7f7f7 45%,#e4e4e4 80%,#d9d9d9)"></div>
<div class="t" style="left:29px;top:32.6px;font-size:20.3px;font-weight:bold;color:#222">个人认为的难点</div>
<div class="t" style="left:29px;top:74px;font-size:10.3px;color:#666">a. <span style="color:#dc3a3a;-webkit-text-stroke:0.2px #dc3a3a;margin-left:1.5px">入门难</span></div>
<div class="t" style="left:29px;top:137px;font-size:10.3px;color:#666">b. <span style="color:#dc3a3a;-webkit-text-stroke:0.2px #dc3a3a;margin-left:1.5px">概念理解难</span></div>
<div class="t" style="left:29px;top:225.5px;font-size:10.3px;color:#666">c. <span style="color:#dc3a3a;-webkit-text-stroke:0.2px #dc3a3a;margin-left:1.5px">编程过程难</span></div>
<div class="a" style="left:29px;top:92.5px;font-size:8px;letter-spacing:0.08px;line-height:12.4px;color:#5c5c5c;white-space:nowrap;-webkit-text-stroke:0.1px #5c5c5c">
<div style="padding-left:6px">c/C++是一门计算机语言，我相信包括我在内大部分同学在中学阶段是没有接触过编程的，因此C++学习对于我们来说就是</div>
<div>一个全新的东西，如果这时突然出现一个全新的世界观，而且不解释原因就让人全盘接受，大部分人也是无法一下子就能搞</div>
<div>清楚所有问题的，这就存在一个<span class="ql">“</span>入门<span class="qr">”</span>的问题</div>
</div>
<div class="a" style="left:29px;top:156px;font-size:8px;letter-spacing:0.08px;line-height:12.4px;color:#5c5c5c;white-space:nowrap;-webkit-text-stroke:0.1px #5c5c5c">
<div style="padding-left:8px">我在学习c/C++过程中遇到了各种各样新的概念，比如<span class="ql">“</span>指针<span class="qr">”</span>、<span class="ql">“</span>返回值<span class="qr">”</span>等等，这些之前闻所未闻的概念常常让人感</div>
<div>到深奥，而偏偏这些概念又是C++中非常重要的一部分，这就让很多同学在理解概念上花费了大量的时间，比如我们刚学的</div>
<div>指针就是一个非常头疼的难点，本身其概念就较为抽象，且使用不当容易造成程序崩盘，对于我们在编程时的逻辑思维要求</div>
<div>较高，数组指针，指针数组，指针函数，函数指针，行指针，列指针……这些概念本身及其写法极易混淆，所以我觉得我们</div>
<div>需要在学习的时候，尽快就梳理清楚。</div>
</div>
<div class="a" style="left:29px;top:244.5px;font-size:8px;letter-spacing:0.08px;line-height:12.3px;color:#5c5c5c;white-space:nowrap;-webkit-text-stroke:0.1px #5c5c5c">
<div style="padding-left:8px">c/C++语言并不只是理论知识，它是需要在编程平台上运行的实实在在的需要实践的。哪怕我们能比较顺利地搞懂C++的</div>
<div>理论知识，到了上机动手操作的时候却还是觉得无从下手，或者一下手就疯狂报错，而编程又是非常考验细节和逻辑的学科，</div>
<div>我相信大部分同学都经历过那种对着自己一个一个敲下来的代码，满怀期待的点击运行的时候，却被报错的感受，而且经常</div>
<div>会因为粗心忽略掉中英文输入法差异导致的程序报错，在自己差错的时候，是非常非常非常折磨人和考验耐心的。</div>
</div>
</div>
<div class="a" style="left:626.2px;top:91.5px;width:6.3px;height:386.5px;background:#e3e3e3;"></div>
<svg class="a" style="left:628px;top:96.5px" width="3" height="2.5" viewBox="0 0 3 2.5"><path d="M0 2.2 L1.5 0.3 L3 2.2Z" fill="#444"/></svg>
<div class="a" style="left:626.5px;top:188.8px;width:5.8px;height:82.5px;background:#fdfdfd;border:1px solid #d6d6d6;border-radius:3px"></div>
<svg class="a" style="left:628px;top:445.5px" width="3" height="3" viewBox="0 0 3 3"><path d="M0 0.5 L1.5 2.5 L3 0.5Z" fill="#555"/></svg>
<svg class="a" style="left:627.8px;top:453.8px" width="3.5" height="4" viewBox="0 0 3.5 4"><path d="M0.3 0.5 L1.75 1.8 L3.2 0.5 M0.3 2.3 L1.75 3.6 L3.2 2.3" stroke="#555" stroke-width="0.6" fill="none"/></svg>
<svg class="a" style="left:627.8px;top:462.8px" width="3.5" height="4" viewBox="0 0 3.5 4"><path d="M0.3 0.5 L1.75 1.8 L3.2 0.5 M0.3 2.3 L1.75 3.6 L3.2 2.3" stroke="#555" stroke-width="0.6" fill="none"/></svg>
<div class="a" style="left:632.5px;top:91px;width:20.5px;height:387.5px;background:#ececec;"></div>
<div class="a" style="left:638.8px;top:97px;width:7.5px;height:0.9px;background:#d4d4d4;"></div>
<svg class="a" style="left:640.5px;top:109.3px" width="7.5" height="7.5" viewBox="0 0 7.5 7.5"><path d="M3.75 0.5 L7 3.5 L5.8 7 H1.7 L0.5 3.5Z" stroke="#6a6a6a" stroke-width="0.7" fill="none"/><path d="M1 7 H6.5" stroke="#6a6a6a" stroke-width="0.7" fill="none"/></svg>
<div class="t" style="left:594px;width:100px;text-align:center;top:118.63px;font-size:5.4px;color:#666">动画</div>
<svg class="a" style="left:640.5px;top:134.3px" width="8" height="7.5" viewBox="0 0 8 7.5"><rect x="0.5" y="0.5" width="5" height="4" rx="0.8" stroke="#6a6a6a" stroke-width="0.7" fill="none"/><rect x="2.5" y="3" width="5" height="4" rx="0.8" stroke="#6a6a6a" stroke-width="0.7" fill="none" fill="#efefef"/></svg>
<div class="t" style="left:594px;width:100px;text-align:center;top:144.03px;font-size:5.4px;color:#666">切换</div>
<svg class="a" style="left:641px;top:161px" width="6.5" height="7.5" viewBox="0 0 6.5 7.5"><path d="M3.25 0.5 Q6 3.5 6 5 A2.75 2.5 0 0 1 0.5 5 Q0.5 3.5 3.25 0.5Z" stroke="#6a6a6a" stroke-width="0.7" fill="none"/><path d="M1.5 5 H5" stroke="#6a6a6a" stroke-width="0.7" fill="none"/></svg>
<div class="t" style="left:594.3px;width:100px;text-align:center;top:169.53px;font-size:5.4px;color:#666">艺术字</div>
<svg class="a" style="left:640.5px;top:186.3px" width="8" height="8.2" viewBox="0 0 8 8.2"><circle cx="2" cy="2" r="1.5" stroke="#6a6a6a" stroke-width="0.7" fill="none"/><circle cx="6" cy="2" r="1.5" stroke="#6a6a6a" stroke-width="0.7" fill="none"/><circle cx="2" cy="6.2" r="1.5" stroke="#6a6a6a" stroke-width="0.7" fill="none"/><circle cx="6" cy="6.2" r="1.5" stroke="#6a6a6a" stroke-width="0.7" fill="none"/></svg>
<div class="t" style="left:594px;width:100px;text-align:center;top:197.03px;font-size:5.4px;color:#666">颜色</div>
<svg class="a" style="left:640.5px;top:213.5px" width="8" height="8" viewBox="0 0 8 8"><path d="M0.5 0.5 V7.5 H7.5" stroke="#6a6a6a" stroke-width="0.7" fill="none"/><path d="M2 7 V5 M4 7 V3 M6 7 V1.5" stroke="#6a6a6a" stroke-width="0.7" fill="none"/></svg>
<div class="t" style="left:594px;width:100px;text-align:center;top:222.53px;font-size:5.4px;color:#666">图表</div>
<svg class="a" style="left:640.5px;top:240px" width="8" height="7.5" viewBox="0 0 8 7.5"><path d="M0.5 1.5 H7.5 M0.5 4 H7.5 M0.5 6.5 H5" stroke="#6a6a6a" stroke-width="0.7" fill="none"/></svg>
<div class="t" style="left:594px;width:100px;text-align:center;top:249.53px;font-size:5.4px;color:#666">属性</div>
<svg class="a" style="left:640.5px;top:265.5px" width="8" height="7.5" viewBox="0 0 8 7.5"><rect x="0.5" y="0.5" width="7" height="6.5" stroke="#6a6a6a" stroke-width="0.7" fill="none"/></svg>
<div class="t" style="left:594px;width:100px;text-align:center;top:273.03px;font-size:5.4px;color:#666">传能</div>
<svg class="a" style="left:640.5px;top:291.5px" width="8" height="6.5" viewBox="0 0 8 6.5"><rect x="0.5" y="0.5" width="7" height="5.5" stroke="#c0c0c0" stroke-width="0.7" fill="none"/><path d="M1 5.5 L3.5 3 L6.5 5.5" stroke="#c0c0c0" stroke-width="0.7" fill="none"/></svg>
<div class="t" style="left:594px;width:100px;text-align:center;top:299.53px;font-size:5.4px;color:#bdbdbd">图库</div>
<svg class="a" style="left:641px;top:317.5px" width="6.5" height="6.5" viewBox="0 0 6.5 6.5"><circle cx="3.25" cy="3.25" r="2.8" stroke="#6a6a6a" stroke-width="0.7" fill="none"/><path d="M3.25 1.5 V3.5 L4.5 4.5" stroke="#6a6a6a" stroke-width="0.7" fill="none"/></svg>
<div class="t" style="left:594px;width:100px;text-align:center;top:327.53px;font-size:5.4px;color:#666">风格</div>
<div class="a" style="left:637px;top:342.8px;width:14px;height:0.6px;background:#dadada;"></div>
<svg class="a" style="left:640.5px;top:353.8px" width="7" height="1.5" viewBox="0 0 7 1.5"><circle cx="1" cy="0.75" r="0.6" fill="#777"/><circle cx="3.5" cy="0.75" r="0.6" fill="#777"/><circle cx="6" cy="0.75" r="0.6" fill="#777"/></svg>
<div class="t" style="left:594px;width:100px;text-align:center;top:359.53px;font-size:5.4px;color:#666">设置</div>
<div class="a" style="left:639.5px;top:245px;width:14px;height:37px;background:rgba(52,53,56,0.78);border-radius:3px 0 0 3px"></div>
<svg class="a" style="left:644.5px;top:258px" width="5.5" height="11" viewBox="0 0 5.5 11"><path d="M0.6 0.6 L4.8 5.5 L0.6 10.4" stroke="#bdbdbd" stroke-width="0.9" fill="none"/></svg>
<div class="a" style="left:653px;top:24.5px;width:141px;height:454px;background:linear-gradient(to right,#2a2b2e 0,#2a2b2e 1.5px,#47484c 2.5px,#404145 7px,#2c2d30 60%,#28292c 100%)"></div>
<div class="a" style="left:660.8px;top:50px;width:128px;height:79.3px;border:1px solid #20904b;border-radius:2.5px;background:#1c1d1f"></div>
<div class="a" style="left:660.8px;top:136.9px;width:128px;height:79.3px;border:1px solid #414247;border-radius:2.5px;background:#232427"></div>
<div class="a" style="left:660.8px;top:223.8px;width:128px;height:79.3px;border:1px solid #414247;border-radius:2.5px;background:#232427"></div>
<div class="a" style="left:660.8px;top:310.9px;width:128px;height:79.3px;border:1px solid #414247;border-radius:2.5px;background:#232427"></div>
<div class="a" style="left:660.8px;top:397.6px;width:128px;height:79.3px;border:1px solid #414247;border-radius:2.5px;background:#232427"></div>
<div class="a" style="left:661.8px;top:110.5px;width:102.7px;height:17.3px;background:#0b0b0c"></div>
<svg class="a" style="left:662px;top:113.0px" width="13" height="12" viewBox="0 0 13 12"><rect x="0.5" y="0" width="12" height="8" rx="1" fill="#fff"/><path d="M4 6 Q5 3 8.5 2.5" stroke="#222" stroke-width="1.1" fill="none"/><path d="M7 1.5 L9.5 2.5 L8 4.5Z" fill="#222"/><rect x="3.5" y="10" width="6" height="1.2" fill="#fff"/></svg>
<svg class="a" style="left:679.5px;top:113.0px" width="12" height="13" viewBox="0 0 12 13"><rect x="3.5" y="0" width="5" height="8.5" rx="2.5" fill="#fff"/><path d="M3.5 6 L8.5 6 Q8.5 8.5 6 8.5 Q3.5 8.5 3.5 6Z" fill="#2fc45a"/><path d="M1.5 5.5 Q1.5 10.5 6 10.5 Q10.5 10.5 10.5 5.5" stroke="#fff" stroke-width="1.2" fill="none"/><rect x="5.4" y="10.5" width="1.2" height="2" fill="#fff"/></svg>
<div class="t" style="left:694.5px;top:116.6px;font-size:9.3px;color:#fff">李学鸿的屏幕共...</div>
<div class="a" style="left:661.3px;top:197.4px;width:40.5px;height:17.3px;background:#0c0c0d;opacity:1"></div>
<svg class="a" style="left:665.5px;top:199.70000000000002px" width="12" height="13" viewBox="0 0 12 13"><rect x="4" y="1" width="4.5" height="7" rx="2.2" fill="#fff"/><path d="M2.5 6 Q2.5 10 6.2 10 Q10 10 10 6" stroke="#fff" stroke-width="1.2" fill="none"/><rect x="5.6" y="10" width="1.2" height="2" fill="#fff"/><path d="M1.5 11.5 L10.5 1.5" stroke="#d8363a" stroke-width="1.2"/></svg>
<div class="t" style="left:681px;top:203.5px;font-size:9.3px;color:#fff">黄鑫</div>
<div class="a" style="left:662.2px;top:284.3px;width:16.3px;height:17.5px;background:#f28a1c"></div>
<svg class="a" style="left:664px;top:286.8px" width="13" height="13" viewBox="0 0 13 13"><circle cx="6.5" cy="4" r="2.8" fill="#fff"/><path d="M1.5 12 Q1.5 7.5 6.5 7.5 Q11.5 7.5 11.5 12Z" fill="#fff"/></svg>
<div class="a" style="left:678.5px;top:284.3px;width:49.9px;height:17.5px;background:#0c0c0d"></div>
<svg class="a" style="left:683px;top:286.6px" width="12" height="13" viewBox="0 0 12 13"><rect x="4" y="1" width="4.5" height="7" rx="2.2" fill="#fff"/><path d="M2.5 6 Q2.5 10 6.2 10 Q10 10 10 6" stroke="#fff" stroke-width="1.2" fill="none"/><rect x="5.6" y="10" width="1.2" height="2" fill="#fff"/><path d="M1.5 11.5 L10.5 1.5" stroke="#d8363a" stroke-width="1.2"/></svg>
<div class="t" style="left:698.5px;top:290.40000000000003px;font-size:9.3px;color:#fff">王志国</div>
<div class="a" style="left:661.3px;top:371.4px;width:48.700000000000045px;height:17.3px;background:#0c0c0d;opacity:1"></div>
<svg class="a" style="left:665.5px;top:373.7px" width="12" height="13" viewBox="0 0 12 13"><rect x="4" y="1" width="4.5" height="7" rx="2.2" fill="#fff"/><path d="M2.5 6 Q2.5 10 6.2 10 Q10 10 10 6" stroke="#fff" stroke-width="1.2" fill="none"/><rect x="5.6" y="10" width="1.2" height="2" fill="#fff"/><path d="M1.5 11.5 L10.5 1.5" stroke="#d8363a" stroke-width="1.2"/></svg>
<div class="t" style="left:681px;top:377.5px;font-size:9.3px;color:#fff">刘志平</div>
<div class="a" style="left:661.3px;top:458.1px;width:48.700000000000045px;height:17.3px;background:#0c0c0d;opacity:1"></div>
<svg class="a" style="left:665.5px;top:460.40000000000003px" width="12" height="13" viewBox="0 0 12 13"><rect x="4" y="1" width="4.5" height="7" rx="2.2" fill="#fff"/><path d="M2.5 6 Q2.5 10 6.2 10 Q10 10 10 6" stroke="#fff" stroke-width="1.2" fill="none"/><rect x="5.6" y="10" width="1.2" height="2" fill="#fff"/><path d="M1.5 11.5 L10.5 1.5" stroke="#d8363a" stroke-width="1.2"/></svg>
<div class="t" style="left:681px;top:464.20000000000005px;font-size:9.3px;color:#fff">朱泽峰</div>
<svg class="a" style="left:704.5px;top:61.3px" width="40.5" height="44.5" viewBox="0 0 40 44"><defs><clipPath id="c0"><ellipse cx="20" cy="22" rx="20" ry="22"/></clipPath></defs><g clip-path="url(#c0)"><rect width="40" height="44" fill="#4e3e5c"/>
<path d="M0 13 L8 13 L8 27 L0 27Z" fill="#5068a6"/>
<path d="M7 10 Q20 5 34 11 L35 36 Q22 44 9 38 Z" fill="#8a4c44"/>
<path d="M11 19 Q20 15 30 19 L30 31 Q22 38 13 32Z" fill="#9a5a4e"/>
<path d="M0 26 Q8 23 14 29 L16 44 L0 44Z" fill="#d6d0d2"/>
<path d="M14 37 Q22 36 31 32 L36 44 L12 44Z" fill="#e2dcdc"/>
<path d="M12 29 L15 44 L13 44 L10 30Z" fill="#7a2624"/>
<path d="M33 13 L40 13 L40 40 L33 40Z" fill="#4a3a58"/>
<path d="M1 20 Q1 3 20 1 Q38 2 39 18 L36 15 L34 21 L31 14 L27 19 L24 12 L20 18 L16 12 L12 19 L10 13 L6 20 L4 15Z" fill="#a46a30"/>
<path d="M6 11 Q13 4 21 6 Q30 5 35 11 Q29 8 22 10 Q14 8 6 11Z" fill="#c48a46"/>
<path d="M14 17 L16 12 L18 17 M26 16 L28 11 L30 17" stroke="#6a4420" stroke-width="0.7" fill="none"/>
<path d="M11.5 21.5 Q14 20 16.5 21.5 Q14 23 11.5 21.5Z" fill="#4f9ad4"/><path d="M23 21.5 Q25.5 20 28 21.5 Q25.5 23 23 21.5Z" fill="#4f9ad4"/>
<rect x="19.3" y="24" width="1.2" height="9" fill="#e8d8d0" opacity="0.8"/>
<path d="M18 33 Q20 34.5 22.5 33" stroke="#4a1a1a" stroke-width="0.9" fill="none"/></g></svg>
<div class="a" style="left:653px;top:24.5px;width:141px;height:120px;background:linear-gradient(rgba(8,8,9,.92),rgba(8,8,9,.55) 35%,rgba(8,8,9,0))"></div>
<div class="a" style="left:653px;top:392px;width:141px;height:86.5px;background:linear-gradient(rgba(8,8,9,0),rgba(8,8,9,.42) 30%,rgba(8,8,9,.55))"></div>
<svg class="a" style="left:704.5px;top:148.20000000000002px" width="40.5" height="44.5" viewBox="0 0 40 44"><defs><clipPath id="c1"><ellipse cx="20" cy="22" rx="20" ry="22"/></clipPath></defs><g clip-path="url(#c1)"><defs><linearGradient id="g2" x1="0" y1="0" x2="1" y2="0.3"><stop offset="0" stop-color="#ababab"/><stop offset="1" stop-color="#7a7a7a"/></linearGradient></defs>
<rect width="40" height="44" fill="url(#g2)"/>
<rect x="14.5" y="6" width="1.2" height="22" fill="#c4c4c4"/>
<rect x="6" y="28.3" width="34" height="2.6" fill="#d2d2d2"/>
<rect x="0" y="30.9" width="40" height="13.1" fill="#6c6c6c"/>
<filter id="b2"><feGaussianBlur stdDeviation="0.5"/></filter><g filter="url(#b2)"><path d="M25 6 Q28 1 34 3 Q38 6 37.5 12 Q36.5 17 33.5 19.5 L31.5 24 Q30.5 28 31.5 31 Q35 36 40 39 L40 44 L14 44 Q22 40 25 34 Q27 28 26.5 22 Q25 16 25 6Z" fill="#202020"/>
<path d="M23.5 6 Q26 2 29 3 Q26.5 8 26.5 14 L25.5 20 Q23 13 23.5 6Z" fill="#e6e6e6"/></g>
<circle cx="13" cy="19" r="1" fill="#555"/></g></svg>
<svg class="a" style="left:704.5px;top:235.10000000000002px" width="40.5" height="44.5" viewBox="0 0 40 44"><defs><clipPath id="c2"><ellipse cx="20" cy="22" rx="20" ry="22"/></clipPath></defs><g clip-path="url(#c2)"><rect width="40" height="44" fill="#ffffff"/>
<path d="M10 6 Q18 3.5 25 8.5 Q28 14 27.5 24" stroke="#333" stroke-width="0.8" fill="none"/>
<path d="M9.5 5.5 L11.5 7.5" stroke="#333" stroke-width="1.2"/>
<path d="M12.5 9.3 L20.8 10.3 L17 16.5Z" fill="#111"/>
<path d="M15.5 15.5 Q20 14 26 16 L27 24 L16 24.5 Q15 20 15.5 15.5Z" stroke="#666" stroke-width="0.5" fill="#fff"/>
<path d="M15 24 L27.5 23.5 L33 28.5 L26 29.8 L22 28.3 L16 30.3Z" fill="#111"/>
<path d="M16 30 L8.5 39.5 M18 29.8 L10.5 40" stroke="#888" stroke-width="0.6"/>
<path d="M28 29.5 L29.5 38.5 L33 40 M31 29 L32.5 37" stroke="#888" stroke-width="0.6" fill="none"/></g></svg>
<svg class="a" style="left:704.5px;top:322.2px" width="40.5" height="44.5" viewBox="0 0 40 44"><defs><clipPath id="c3"><ellipse cx="20" cy="22" rx="20" ry="22"/></clipPath></defs><g clip-path="url(#c3)"><rect width="40" height="44" fill="#dedede"/>
<path d="M20 7 Q27 7 27.5 15 Q28 20 26 23.5 Q24.5 27 24.5 29 Q33 31 37 38 L38 44 L2 44 L3 38 Q7 31 15.5 29 Q15.5 27 14 23.5 Q12 20 12.5 15 Q13 7 20 7Z" fill="#c2c2c2"/></g></svg>
<svg class="a" style="left:704.5px;top:408.90000000000003px" width="40.5" height="44.5" viewBox="0 0 40 44"><defs><clipPath id="c4"><ellipse cx="20" cy="22" rx="20" ry="22"/></clipPath></defs><g clip-path="url(#c4)"><defs><linearGradient id="g5" x1="0" y1="0" x2="0" y2="1"><stop offset="0" stop-color="#e6e6e6"/><stop offset="1" stop-color="#b8b8b8"/></linearGradient></defs>
<rect width="40" height="44" fill="url(#g5)"/>
<path d="M18.5 9 L20.5 1 L22.5 9Z" fill="#dcc048" stroke="#3a3a3a" stroke-width="0.5"/>
<path d="M7 24 Q8 9 20.5 8.5 Q32 9 33 20 L37 32 L39 44 L5 44 L4 33 Z" fill="#a194d6" stroke="#2a2a2a" stroke-width="0.6"/>
<rect x="9" y="17" width="6.5" height="3.3" rx="1.6" fill="#e0e0e0" stroke="#2a2a2a" stroke-width="0.45"/>
<rect x="20" y="17" width="6.5" height="3.3" rx="1.6" fill="#e0e0e0" stroke="#2a2a2a" stroke-width="0.45"/>
<path d="M3 31 Q4 23 11 22.5 L29 22.5 Q34 25 34 32 Q31 39 19 39 Q6 39 3 31Z" fill="#cfcfcf" stroke="#2a2a2a" stroke-width="0.6"/>
<path d="M29 23 L35 31 M31 35 L33 41 M34 34 L36 40" stroke="#2a2a2a" stroke-width="0.5" fill="none"/></g></svg>
<svg class="a" style="left:717px;top:33.8px" width="15" height="10.5" viewBox="0 0 15 10.5"><path d="M7.5 0.5 L14.5 10.3 L0.5 10.3Z" fill="#a0a0a0" stroke="#a0a0a0" stroke-width="0.6" stroke-linejoin="round"/></svg>
<svg class="a" style="left:717.5px;top:467px" width="15" height="10.5" viewBox="0 0 15 10.5"><path d="M0.5 0.3 L14.5 0.3 L7.5 10Z" fill="#fff" stroke="#fff" stroke-width="0.6" stroke-linejoin="round"/></svg>
<div class="a" style="left:0;top:478.5px;width:794px;height:1.5px;background:#fafafa"></div>
</body></html>
